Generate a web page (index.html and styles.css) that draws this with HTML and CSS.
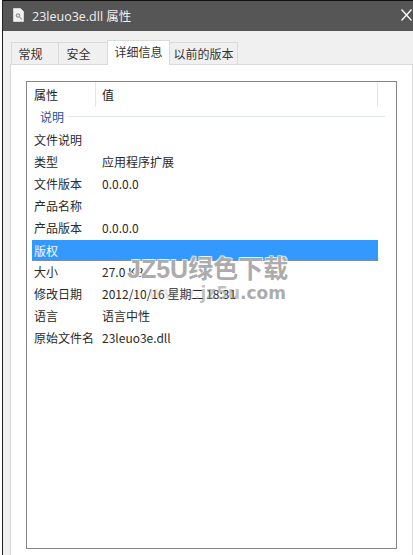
FILE: index.html
```html
<!DOCTYPE html>
<html lang="zh">
<head>
<meta charset="utf-8">
<title>23leuo3e.dll 属性</title>
<link rel="stylesheet" href="styles.css">
</head>
<body>
<div class="window">
  <header class="titlebar">
    <svg class="file-icon" width="11" height="14" viewBox="0 0 11 14"><path d="M.5.5h7l3 3v10H.5z" fill="#f2f2f2" stroke="#d4d4d4"/><circle cx="5" cy="7.500" r="2.300" fill="#9a9a9a"/><circle cx="5" cy="7.500" r="1" fill="#e8e8e8"/><path d="M6.500 9l2.500 2.500" stroke="#a8a8a8" stroke-width="1.200"/></svg>
    <span class="title">23leuo3e.dll 属性</span>
    <svg class="close" width="11" height="12" viewBox="0 0 11 12"><path d="M0.500 0.500L10.500 11.500M10.500 0.500L0.500 11.500" stroke="#ffffff" stroke-width="1.300" fill="none"/></svg>
  </header>
  <div class="dialog">
    <nav class="tabs">
      <span class="tab tab-1">常规</span>
      <span class="tab tab-2">安全</span>
      <span class="tab tab-active">详细信息</span>
      <span class="tab tab-4">以前的版本</span>
    </nav>
    <section class="panel">
      <div class="list">
        <div class="list-head">
          <span class="col-name">属性</span>
          <span class="col-value">值</span>
        </div>
        <div class="group"><span>说明</span><i></i></div>
        <div class="row"><span class="name">文件说明</span><span></span></div>
        <div class="row"><span class="name">类型</span><span>应用程序扩展</span></div>
        <div class="row"><span class="name">文件版本</span><span>0.0.0.0</span></div>
        <div class="row"><span class="name">产品名称</span><span></span></div>
        <div class="row"><span class="name">产品版本</span><span>0.0.0.0</span></div>
        <div class="row selected"><span class="name">版权</span><span></span></div>
        <div class="row"><span class="name">大小</span><span>27.0 KB</span></div>
        <div class="row"><span class="name">修改日期</span><span>2012/10/16 星期二 18:31</span></div>
        <div class="row"><span class="name">语言</span><span>语言中性</span></div>
        <div class="row"><span class="name">原始文件名</span><span>23leuo3e.dll</span></div>
      </div>
    </section>
  </div>
  <div class="watermark">
    <div class="wm-main">JZ5U绿色下载</div>
    <div class="wm-sub"><span class="wm-faint">www.</span><span class="wm-mid">jz5u</span>.com</div>
  </div>
</div>
</body>
</html>
```
FILE: styles.css
```css
* { box-sizing: border-box; }
html, body { margin: 0; padding: 0; background: #fff; }
body { width: 413px; height: 555px; overflow: hidden; font-family: "Noto Sans CJK SC", "Liberation Sans", sans-serif; font-size: 12px; color: #222; }
.window { position: relative; width: 413px; height: 555px; padding-left: 2px; background: #fff; }
.window::before { content: ""; position: absolute; left: 2px; top: 0; bottom: 0; width: 1px; background: #222; }
.titlebar { height: 31px; background: #565656; border-top: 1px solid #111; display: flex; align-items: center; padding: 0 1px 2px 11px; color: #eee; }
.file-icon { flex: none; margin-right: 8px; }
.title { flex: 1; font-family: "Open Sans", "Noto Sans CJK SC", sans-serif; font-size: 12.500px; }
.close { flex: none; display: block; }
.dialog { height: 524px; background: #f0f0f0; padding-left: 8px; display: flex; flex-direction: column; }
.tabs { height: 33px; display: flex; align-items: flex-end; padding-left: 1px; }
.tab { height: 22px; display: flex; align-items: center; justify-content: center; background: #f0f0f0; border: 1px solid #dadada; border-bottom: 0; margin-right: -1px; color: #333; }
.tab-1 { width: 48px; padding-right: 9px; }
.tab-2 { width: 50px; padding-right: 9px; }
.tab-active { width: 63px; height: 25px; background: #fff; position: relative; z-index: 1; margin-bottom: -1px; padding-bottom: 3px; }
.tab-4 { width: 69px; }
.panel { flex: 1; background: #fff; border: 1px solid #dadada; border-width: 1px 1px 0 1px; padding: 16px 15px 0 15px; }
.list { width: 371px; height: 468px; border: 1px solid #858585; background: #fff; padding: 0 18px 0 7px; }
.list-head { height: 25px; display: flex; align-items: center; }
.col-name { width: 62px; height: 100%; display: flex; align-items: center; border-right: 1px solid #e5e5e5; }
.col-value { flex: 1; padding-left: 6px; height: 100%; display: flex; align-items: center; border-right: 1px solid #e5e5e5; }
.group { height: 22px; display: flex; align-items: center; padding-left: 6px; padding-bottom: 3px; color: #1f4f9c; margin-right: -7px; }
.group i { flex: 1; height: 1px; background: #e2e6ee; margin-left: 4px; }
.row { height: 22px; padding-bottom: 2px; display: flex; align-items: center; color: #2a2a2a; }
.row .name { width: 68px; flex: none; white-space: nowrap; }
.row.selected { height: 21px; margin-top: 1px; background: #3399ff; color: #f4f9ff; margin-left: -2px; padding-left: 2px; padding-bottom: 0; border-bottom: 1px solid #7f8fa0; }
.watermark { position: absolute; left: 127px; top: 255px; width: 164px; color: rgba(150, 150, 150, .8); font-family: "Liberation Sans", "Noto Sans CJK SC", sans-serif; font-weight: bold; pointer-events: none; }
.wm-main { font-size: 25px; line-height: 28px; white-space: nowrap; text-shadow: -1px -1px 0 rgba(255, 255, 255, .7), 1px -1px 0 rgba(255, 255, 255, .7), -1px 1px 0 rgba(255, 255, 255, .7), 1px 1px 0 rgba(255, 255, 255, .7); }
.wm-sub { font-family: "DejaVu Sans", sans-serif; font-size: 17px; line-height: 18px; margin-top: 1px; white-space: nowrap; text-align: right; padding-right: 5px; }
.wm-faint { color: rgba(170, 170, 170, .3); }
.wm-mid { color: rgba(140, 140, 140, .55); }
```
